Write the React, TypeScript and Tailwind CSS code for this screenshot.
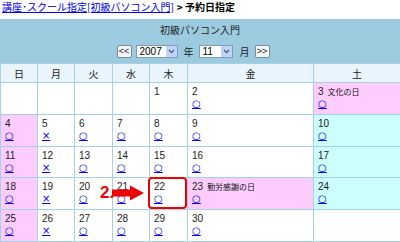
import React from "react";

type Day = { d: number; m?: "o" | "x"; h?: string };

const weekdays = ["日", "月", "火", "水", "木", "金", "土"];

const weeks: (Day | null)[][] = [
  [null, null, null, null, { d: 1 }, { d: 2, m: "o" }, { d: 3, m: "o", h: "文化の日" }],
  [{ d: 4, m: "o" }, { d: 5, m: "x" }, { d: 6, m: "o" }, { d: 7, m: "o" }, { d: 8, m: "o" }, { d: 9, m: "o" }, { d: 10, m: "o" }],
  [{ d: 11, m: "o" }, { d: 12, m: "x" }, { d: 13, m: "o" }, { d: 14, m: "o" }, { d: 15, m: "o" }, { d: 16, m: "o" }, { d: 17, m: "o" }],
  [{ d: 18, m: "o" }, { d: 19, m: "x" }, { d: 20, m: "o" }, { d: 21, m: "o" }, { d: 22, m: "o" }, { d: 23, m: "o", h: "勤労感謝の日" }, { d: 24, m: "o" }],
  [{ d: 25, m: "o" }, { d: 26, m: "x" }, { d: 27, m: "o" }, { d: 28, m: "o" }, { d: 29, m: "o" }, { d: 30, m: "o" }, null],
];

const jp = "font-['Noto_Sans_CJK_JP',sans-serif]";

function cellBg(day: Day | null, col: number) {
  if (!day) return "bg-white";
  if (day.h || col === 0) return "bg-[#ffccff]";
  if (col === 6) return "bg-[#ccffff]";
  return "bg-white";
}

function NavButton({ label }: { label: string }) {
  return (
    <span className="flex h-[13px] w-[15px] items-center justify-center rounded-[2px] border border-[#7a8a99] bg-[#f4f6f8] font-['Liberation_Sans',sans-serif] text-[9px] leading-none text-[#223]">
      {label}
    </span>
  );
}

function Select({ value, width }: { value: string; width: string }) {
  return (
    <span className={`flex h-[13px] items-center border border-[#7f9db9] bg-white ${width}`}>
      <span className="flex-1 pl-[3px] font-['Liberation_Sans',sans-serif] text-[10px] leading-none text-black">{value}</span>
      <span className="flex h-full w-[11px] items-center justify-center bg-[#c1d3fb]">
        <svg width="7" height="5" viewBox="0 0 7 5">
          <path d="M1 1 L3.5 3.5 L6 1" fill="none" stroke="#4d6185" strokeWidth="1.4" />
        </svg>
      </span>
    </span>
  );
}

export default function App() {
  return (
    <div className="relative h-[242px] w-[400px] overflow-hidden bg-white">
      {/* Breadcrumb */}
      <div className={`flex h-[19px] items-start pl-[2px] pt-[1px] text-[10px] leading-[12px] ${jp}`}>
        <a className="text-[#0000ee] underline">講座･スクール指定[初級パソコン入門]</a>
        <span className="ml-[3px] font-bold text-black">&gt; 予約日指定</span>
      </div>

      {/* Panel */}
      <div className="flex h-[44px] flex-col items-center bg-[#9ccbe0]">
        <div className={`mt-[5px] text-[10px] leading-[12px] text-[#222] ${jp}`}>初級パソコン入門</div>
        <div className={`mt-[8px] flex items-center pr-[14px] text-[10px] text-[#222] ${jp}`}>
          <NavButton label="<<" />
          <span className="ml-[4px]">
            <Select value="2007" width="w-[42px]" />
          </span>
          <span className="ml-[6px] mr-[5px]">年</span>
          <Select value="11" width="w-[34px]" />
          <span className="ml-[7px] mr-[5px]">月</span>
          <NavButton label=">>" />
        </div>
      </div>

      {/* Calendar */}
      <div className="grid grid-cols-[36px_36px_37px_36px_37px_125px_1fr] gap-px bg-[#a6d2e8] p-px pr-0">
        {weekdays.map((w) => (
          <div key={w} className={`flex h-[18px] items-center justify-center bg-[#eaf4fc] text-[10px] text-[#222] ${jp}`}>
            {w}
          </div>
        ))}
        {weeks.map((week, r) =>
          week.map((day, c) => (
            <div
              key={`${r}-${c}`}
              className={`${r === 2 ? "h-[30px]" : "h-[31px]"} px-[4px] pt-[3px] ${cellBg(day, c)}`}
            >
              {day && (
                <>
                  <div className="flex items-baseline gap-[4px] leading-[12px]">
                    <span className="font-['Liberation_Sans',sans-serif] text-[10px] text-[#222]">{day.d}</span>
                    {day.h && <span className={`text-[8px] text-[#111] ${jp}`}>{day.h}</span>}
                  </div>
                  {day.m && (
                    <a className="block w-fit font-['DejaVu_Sans',sans-serif] text-[10px] leading-[12px] text-[#0000ee] underline">
                      {day.m === "o" ? "○" : "×"}
                    </a>
                  )}
                </>
              )}
            </div>
          ))
        )}
      </div>

      {/* Annotation: step 2 */}
      <div className="absolute left-[148px] top-[177px] h-[32px] w-[39px] rounded-[4px] border-2 border-[#ee0000]" />
      <div className="absolute left-[100px] top-[183px] flex items-center">
        <span className="font-['Liberation_Sans',sans-serif] text-[17px] font-bold leading-[20px] text-[#ee0000]">2.</span>
        <svg width="33" height="16" viewBox="0 0 33 16" className="-ml-[2px]">
          <path d="M0 4.5 H18 V0.5 L32 8 L18 15.5 V11.5 H0 Z" fill="#ee0000" />
        </svg>
      </div>
    </div>
  );
}
